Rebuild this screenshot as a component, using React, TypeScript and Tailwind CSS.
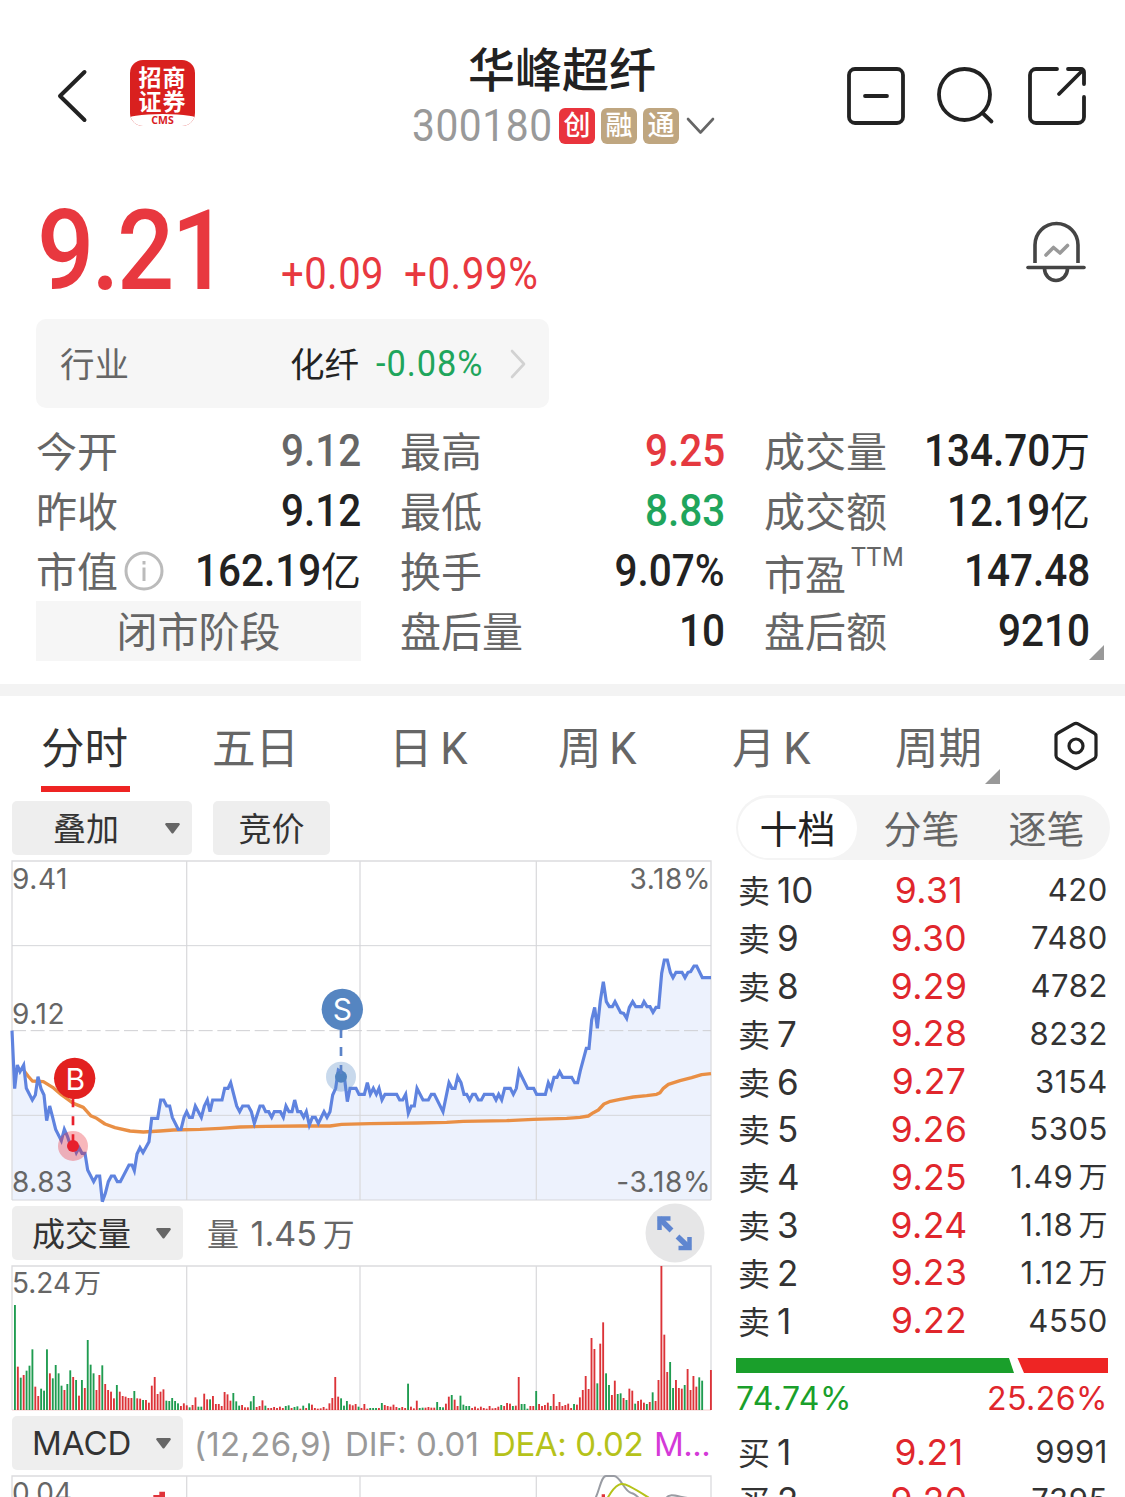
import { clsx } from "clsx";

interface Quote {
  label: string;
  value: string;
  unit?: string;
  tone?: string;
  info?: boolean;
  sup?: string;
}

const quotes: Quote[][] = [
  [
    { label: "今开", value: "9.12", tone: "text-[#666]" },
    { label: "最高", value: "9.25", tone: "text-[#e5393f]" },
    { label: "成交量", value: "134.70", unit: "万" },
  ],
  [
    { label: "昨收", value: "9.12" },
    { label: "最低", value: "8.83", tone: "text-[#1fa55c]" },
    { label: "成交额", value: "12.19", unit: "亿" },
  ],
  [
    { label: "市值", value: "162.19", unit: "亿", info: true },
    { label: "换手", value: "9.07%" },
    { label: "市盈", value: "147.48", sup: "TTM" },
  ],
  [
    { label: "闭市阶段", value: "" },
    { label: "盘后量", value: "10" },
    { label: "盘后额", value: "9210" },
  ],
];

const asks = [
  { level: "10", price: "9.31", vol: "420" },
  { level: "9", price: "9.30", vol: "7480" },
  { level: "8", price: "9.29", vol: "4782" },
  { level: "7", price: "9.28", vol: "8232" },
  { level: "6", price: "9.27", vol: "3154" },
  { level: "5", price: "9.26", vol: "5305" },
  { level: "4", price: "9.25", vol: "1.49", unit: "万" },
  { level: "3", price: "9.24", vol: "1.18", unit: "万" },
  { level: "2", price: "9.23", vol: "1.12", unit: "万" },
  { level: "1", price: "9.22", vol: "4550" },
];

const bids = [
  { level: "1", price: "9.21", vol: "9991" },
  { level: "2", price: "9.20", vol: "7395" },
];

// plot units are a third of a pixel
const pricePoints =
  "36,542 44,716 52,645 60,665 71,645 79,715 97,750 106,735 114,680 123,716 132,735 140,812 149,768 158,802 167,838 184,872 193,838 202,858 211,885 219,880 229,908 237,893 246,910 255,910 263,960 281,995 290,978 299,978 307,1055 316,1030 325,995 334,978 343,978 352,995 361,995 387,945 396,945 403,962 411,912 420,893 429,908 447,875 455,805 473,805 482,750 491,750 500,768 509,768 517,802 535,838 543,838 552,802 560,785 568,802 577,802 586,768 604,802 613,768 622,750 630,785 638,750 666,750 674,715 684,715 692,698 710,768 719,785 728,768 745,768 754,785 763,820 780,768 789,768 797,785 806,785 815,802 823,785 841,785 850,802 858,768 867,785 876,785 884,750 893,785 902,785 911,802 919,785 928,825 937,802 946,802 955,820 972,785 981,802 990,785 998,735 1007,715 1015,660 1024,665 1033,680 1042,755 1050,715 1068,715 1077,733 1093,733 1102,698 1111,733 1120,715 1129,733 1137,715 1146,750 1155,733 1190,733 1199,750 1208,750 1217,733 1225,790 1234,768 1243,768 1251,715 1269,750 1285,750 1294,733 1303,733 1329,785 1347,698 1356,715 1365,715 1373,680 1383,698 1392,733 1400,733 1409,750 1418,733 1426,733 1435,750 1444,750 1453,733 1479,733 1488,750 1496,733 1505,750 1514,715 1531,715 1540,733 1549,715 1557,663 1583,715 1601,715 1610,733 1636,733 1645,698 1653,715 1662,682 1671,682 1679,665 1688,682 1715,682 1724,698 1733,698 1741,662 1759,595 1767,595 1775,510 1784,472 1792,535 1801,452 1810,395 1819,455 1828,470 1837,470 1845,455 1862,488 1871,490 1880,505 1888,472 1898,455 1907,470 1925,470 1932,455 1941,470 1950,470 1959,487 1968,472 1976,472 1985,370 1993,330 2002,330 2011,367 2019,383 2028,367 2046,367 2055,383 2064,367 2072,365 2082,348 2090,348 2107,383 2133,383";

const averagePoints =
  "72,662 84,678 97,693 130,695 158,712 185,735 220,760 250,772 272,797 290,805 315,822 345,833 390,843 430,846 480,843 520,840 600,838 660,835 720,831 800,829 900,828 990,828 1025,823 1110,821 1250,819 1340,817 1390,814 1520,812 1600,808 1700,805 1740,802 1765,798 1780,788 1795,780 1812,762 1828,755 1860,748 1900,741 1940,737 1970,733 1980,728 1990,715 2005,703 2040,692 2075,683 2105,674 2133,671";

// one entry per minute: direction + height
const volumes =
  "g315 r130 g97 r105 g118 g133 g182 r70 r42 g64 g58 g182 r110 g95 g135 g110 g73 r60 g78 g119 r99 g90 r43 g90 r66 g210 g136 g110 r60 r105 g134 r78 r60 r55 r35 g75 r55 r42 r40 r36 r36 g57 r35 r34 g30 r30 r22 r73 r99 r48 r55 r62 g28 g27 g36 g27 g20 r12 r20 r14 g8 r15 r38 g10 g10 r49 r32 g32 r42 r18 r18 r12 r54 r47 r28 g51 g26 g13 r15 r8 r8 g26 g42 r9 r12 r29 g13 r6 r6 r9 r6 r10 r6 g12 g14 r6 g9 g11 r4 g13 r6 g20 r16 r6 r4 r5 r9 r4 r20 r36 r99 r40 g35 g13 g27 r17 r14 r18 g10 r6 r18 r4 g6 g6 g6 r6 g21 r15 r12 r10 r16 r9 g6 r9 r6 g79 r10 r5 r28 g6 g7 r7 r9 r7 r7 g24 g9 g8 r19 r40 g45 r31 r12 g43 g16 g12 g12 r6 r10 r5 r10 r6 r4 r12 r5 r6 r10 g15 r12 r21 r19 g12 r13 r99 g18 g18 g4 r12 r12 g57 r18 r12 r15 r22 g12 r48 r12 r24 r12 r15 r19 r6 g18 r16 r38 r60 r102 r63 r216 r183 g80 r199 r263 g110 g75 r45 r88 g48 g50 r36 g30 r64 r58 g19 r27 r31 r22 g18 r24 g53 r27 r90 r432 r226 r114 g144 g66 r90 r66 r64 g75 r123 r60 r102 r70 g98 g88 r0 r0 r120".split(
    " "
  );

function Header() {
  return (
    <header className="grid h-[192px] grid-cols-[412px_303px_1fr] text-[#222]">
      <div className="flex items-start gap-[41px] pt-[60px] pl-[56px]">
        <svg className="mt-[8px] h-[56px] w-[33px]" viewBox="0 0 33 56" fill="none" stroke="#222" strokeWidth="4" strokeLinecap="round" strokeLinejoin="round">
          <path d="M28.5 4 4 28 28.500 52" />
        </svg>
        {/* broker logo */}
        <div className="flex h-[66px] w-[65px] flex-col items-center overflow-hidden rounded-[13px] bg-[#d9201f] font-['Noto_Sans_CJK_SC',sans-serif] text-white">
          <div className="pt-[4px] text-center text-[23px] leading-[24px] font-bold tracking-[1px]">
            <div>招商</div>
            <div>证券</div>
          </div>
          <div className="mt-[2px] w-[75px] flex-1 rounded-t-[50%] bg-white text-center font-['Open_Sans',sans-serif] text-[10.500px] leading-[12px] font-bold text-[#d9201f]">
            CMS
          </div>
        </div>
      </div>
      <div className="flex flex-col items-center pt-[42px] pr-[3px]">
        <h1 className="text-[47px] leading-[58px] font-medium">华峰超纤</h1>
        <div className="mt-[6px] -mr-[3px] flex h-[40px] items-center">
          <span className="w-[147px] origin-left scale-x-[0.915] text-[44.500px] leading-[40px] tracking-[0.600px] text-[#999]">
            300180
          </span>
          <div className="flex gap-[6px] text-[27px] leading-[37px] font-medium text-white">
            <span className="h-[36px] w-[36px] rounded-[6px] bg-[#e9343d] text-center">创</span>
            <span className="h-[36px] w-[36px] rounded-[6px] bg-[#bfa680] text-center">融</span>
            <span className="h-[36px] w-[36px] rounded-[6px] bg-[#bfa680] text-center">通</span>
          </div>
          <svg className="ml-[7px] h-[18px] w-[29px]" viewBox="0 0 29 18" fill="none" stroke="#666" strokeWidth="2.600" strokeLinecap="round" strokeLinejoin="round">
            <path d="M2 2 14.500 15.500 27 2" />
          </svg>
        </div>
      </div>
      <div className="flex items-start gap-[31px] pt-[66px] pl-[131px]">
        <svg className="h-[60px] w-[60px]" viewBox="0 0 60 60" fill="none" stroke="#222" strokeWidth="3.800" strokeLinecap="round">
          <rect x="3" y="3" width="54" height="54" rx="6" />
          <path d="M19 30h22" />
        </svg>
        <svg className="h-[60px] w-[60px]" viewBox="0 0 60 60" fill="none" stroke="#222" strokeWidth="3.800" strokeLinecap="round">
          <circle cx="27.500" cy="28.500" r="25.500" />
          <path d="m45.500 47 9 8.500" />
        </svg>
        <svg className="-ml-[1px] h-[60px] w-[60px]" viewBox="0 0 60 60" fill="none" stroke="#222" strokeWidth="3.800" strokeLinecap="round" strokeLinejoin="round">
          <path d="M30 3H9a6 6 0 0 0-6 6v42a6 6 0 0 0 6 6h42a6 6 0 0 0 6-6V31" />
          <path d="M41 3h13a3 3 0 0 1 3 3v12M55 5 32 28" />
        </svg>
      </div>
    </header>
  );
}

function PriceBlock() {
  return (
    <section className="flex h-[127px] items-start text-[#e8383f]">
      <div className="w-[244px] pl-[37px]">
        <div className="w-[200px] origin-left scale-x-[0.9] text-[112px] leading-[118px] font-medium tracking-[-3px]">
          9.21
        </div>
      </div>
      <div className="flex w-[780px] gap-[22px] pt-[58px] pl-[37px] text-[43.500px] leading-[50px] tracking-[0.500px]">
        <span className="w-[101px] origin-left scale-x-[0.92] whitespace-nowrap">+0.09</span>
        <span className="origin-left scale-x-[0.93]">+0.99%</span>
      </div>
      <svg className="mt-[29px] h-[62px] w-[64px]" viewBox="0 0 64 62" fill="none" stroke="#444" strokeWidth="3.600" strokeLinecap="round">
        <path d="M11 42V24a21 21 0 0 1 43 0v18" strokeLinecap="butt" />
        <path d="M4 46.500h56" />
        <path d="M20.500 47.500a11.500 12 0 0 0 23 0" />
        <path d="m22 34 7.500-7.500 6.500 5.500 7.500-7.500" stroke="#999" strokeLinejoin="round" />
      </svg>
    </section>
  );
}

function IndustryBar() {
  return (
    <div className="ml-[36px] flex h-[89px] w-[513px] items-center rounded-[10px] bg-[#f6f6f6] pl-[24px]">
      <span className="w-[230px] pt-[5px] text-[34.500px] text-[#666]">行业</span>
      <span className="w-[86px] pt-[5px] text-[34.500px] text-[#222]">化纤</span>
      <span className="w-[134px] origin-left scale-x-[0.93] text-[37px] tracking-[1px] text-[#1fa55c]">-0.08%</span>
      <svg className="h-[32px] w-[16px]" viewBox="0 0 16 32" fill="none" stroke="#d2d2d2" strokeWidth="2.600" strokeLinecap="round" strokeLinejoin="round">
        <path d="M2 3 14 16 2 29" />
      </svg>
    </div>
  );
}

function QuoteCell({ label, value, unit, tone, info, sup }: Quote) {
  if (!value) {
    return (
      <div className="h-[60px] bg-[#f6f6f6] text-center text-[41px] leading-[64px] text-[#666]">{label}</div>
    );
  }
  return (
    <div className="flex h-[60px] items-center justify-between whitespace-nowrap">
      <div className="flex items-center text-[41px] leading-[60px] text-[#666]">
        <span className={sup ? "pt-[10px]" : "pt-[4px]"}>{label}</span>
        {sup && <sup className="top-0 mb-[26px] ml-[5px] text-[25px] leading-[28px] tracking-[0.500px]">{sup}</sup>}
        {info && (
          <svg className="ml-[6px] h-[40px] w-[40px]" viewBox="0 0 40 40" fill="none" stroke="#bbb" strokeWidth="3">
            <circle cx="20" cy="20" r="18" />
            <path d="M20 16.500V30M20 10v3.500" />
          </svg>
        )}
      </div>
      <div className={clsx("flex items-center text-[44px] leading-[60px]", tone ?? "text-[#222]")}>
        <span className="origin-right scale-x-[0.92] font-medium">{value}</span>
        {unit && <span className="pt-[4px] text-[40px]">{unit}</span>}
      </div>
    </div>
  );
}

function QuoteGrid() {
  return (
    <section className="relative mt-[13px] mr-[35px] ml-[36px] grid h-[263px] grid-cols-[325px_325px_326px] content-start gap-x-[39px]">
      {quotes.flat().map((q) => (
        <QuoteCell key={q.label} {...q} />
      ))}
      <svg className="absolute top-[224px] right-[-14px] h-[15px] w-[15px]" viewBox="0 0 15 15" fill="#999">
        <path d="M15 0v15H0z" />
      </svg>
    </section>
  );
}

function PeriodTabs() {
  return (
    <nav className="flex h-[99px] items-start pt-[20px] text-[43.500px] leading-[67px] [word-spacing:-3px] whitespace-nowrap text-[#666]">
      <div className="ml-[41px] w-[171px] text-[#333]">
        <div className="h-[70px]">分时</div>
        <div className="h-[6px] w-[89px] bg-[#ee2423]" />
      </div>
      <div className="w-[177px]">五日</div>
      <div className="w-[169px]">日 K</div>
      <div className="w-[174px]">周 K</div>
      <div className="w-[163px]">月 K</div>
      <div className="relative w-[105px]">
        周期
        <svg className="absolute top-[53px] right-0 h-[15px] w-[15px]" viewBox="0 0 15 15" fill="#999">
          <path d="M15 0v15H0z" />
        </svg>
      </div>
      <svg className="mt-[5px] ml-[53px] h-[50px] w-[46px]" viewBox="0 0 46 50" fill="none" stroke="#222" strokeWidth="3.200" strokeLinejoin="round">
        <path d="M20.500 3.200a5 5 0 0 1 5 0L41 12a4 4 0 0 1 2 3.500v19a4 4 0 0 1-2 3.500l-15.500 8.800a5 5 0 0 1-5 0L5 38a4 4 0 0 1-2-3.500v-19A4 4 0 0 1 5 12z" />
        <circle cx="23" cy="25" r="7" />
      </svg>
    </nav>
  );
}

function Caret() {
  return (
    <svg className="h-[11px] w-[15px]" viewBox="0 0 15 11" fill="#666">
      <path d="M1.500 0h12a1.200 1.200 0 0 1 1 2L8.500 10a1.300 1.300 0 0 1-2 0L.5 2a1.200 1.200 0 0 1 1-2z" />
    </svg>
  );
}

function GridLines({ top, bottom }: { top: number; bottom: number }) {
  return (
    <g stroke="#dcdcde" strokeWidth="4">
      <path d={`M36 ${bottom}V${top}H2133V${bottom}`} fill="none" />
      <path d={`M560 ${top}V${bottom}M1080 ${top}V${bottom}M1609 ${top}V${bottom}`} />
    </g>
  );
}

function PriceChart() {
  return (
    <div className="relative h-[346px] text-[28px] leading-[34px] tracking-[0.600px] text-[#666]">
      <svg className="block h-[346px] w-[720px] overflow-visible" viewBox="0 30 2160 1038" fill="none">
        <path d={`M36,1050 L${pricePoints} L2133,1050Z`} fill="#edf2fd" />
        <GridLines top={33} bottom={1050} />
        <path d="M36 287H2133M36 796H2133M36 1050H2133" stroke="#d5d6da" strokeWidth="3" />
        <path d="M36 542H2133" stroke="#cfcfd2" strokeWidth="3" strokeDasharray="42 14" />
        <polyline points={averagePoints} stroke="#e98f45" strokeWidth="10" strokeLinejoin="round" />
        <polyline points={pricePoints} stroke="#5f83df" strokeWidth="9.500" />
        {/* buy marker */}
        <circle cx="219" cy="888" r="45" fill="#e8202c" fillOpacity=".32" />
        <circle cx="219" cy="888" r="18" fill="#e8202c" />
        <path d="M219 880V740" stroke="#e8202c" strokeWidth="8" strokeDasharray="27" />
        <circle cx="224" cy="685" r="62" fill="#e2201f" />
        {/* sell marker */}
        <circle cx="1023" cy="680" r="45" fill="#5588c4" fillOpacity=".32" />
        <circle cx="1023" cy="680" r="18" fill="#4f83c0" />
        <path d="M1023 672V530" stroke="#5b83c8" strokeWidth="8" strokeDasharray="27" />
        <circle cx="1027" cy="478" r="62" fill="#5585c1" />
        <g fill="#fff" fontFamily="Inter, sans-serif" fontSize="90" letterSpacing="0" textAnchor="middle">
          <text x="226" y="721">B</text>
          <text x="1027" y="509">S</text>
        </g>
      </svg>
      <span className="absolute top-[2px] left-[12px]">9.41</span>
      <span className="absolute top-[137px] left-[12px]">9.12</span>
      <span className="absolute top-[305px] left-[12px]">8.83</span>
      <span className="absolute top-[2px] right-[9px]">3.18%</span>
      <span className="absolute top-[305px] right-[9px]">-3.18%</span>
    </div>
  );
}

function VolumeChart() {
  return (
    <div className="relative h-[151px]">
      <svg className="block h-[151px] w-[720px]" viewBox="0 210 2160 453">
        <GridLines top={213} bottom={645} />
        <path d="M36 645H2133" stroke="#efb5b5" strokeWidth="2" />
        {volumes.map((v, i) => {
          const h = Number(v.slice(1));
          return (
            <rect
              key={i}
              x={42 + i * 8.736}
              y={645 - h}
              width="5.600"
              height={h}
              fill={v[0] === "g" ? "#1f9c50" : "#dc3338"}
            />
          );
        })}
      </svg>
      <span className="absolute top-[1px] left-[12px] text-[28px] leading-[34px] text-[#666]">
        5.24<span className="ml-[3px] text-[27px]">万</span>
      </span>
    </div>
  );
}

function LeftPanel() {
  return (
    <div className="w-[720px] pt-[6px] font-['Inter','Noto_Sans_CJK_SC',sans-serif]">
      <div className="flex h-[59px] gap-[21px] pl-[12px] text-[33px] leading-[57px] text-[#333]">
        <div className="flex h-[54px] w-[180px] items-center justify-between rounded-[5px] bg-[#eee] pr-[12px] pl-[41px]">
          <span className="pt-[3px]">叠加</span>
          <Caret />
        </div>
        <div className="h-[54px] w-[117px] rounded-[5px] bg-[#eee] text-center">竞价</div>
      </div>
      <PriceChart />
      <div className="flex h-[59px] pl-[12px]">
        <div className="flex h-[54px] w-[171px] items-center justify-between rounded-[5px] bg-[#eee] pr-[12px] pl-[20px] text-[33px] text-[#333]">
          <span className="pt-[4px]">成交量</span>
          <Caret />
        </div>
        <div className="w-[462px] pl-[24px] text-[34px] leading-[55px] text-[#666]">
          <span className="text-[32px]">量</span> <span className="ml-[2px]">1.45</span>
          <span className="ml-[6px] text-[32px]">万</span>
        </div>
        <svg className="-mt-[3px] h-[60px] w-[60px]" viewBox="0 0 60 60" fill="none" stroke="#5f86d0">
          <circle cx="30" cy="30" r="29.500" fill="#e6e6e7" stroke="none" />
          <path d="M25.500 15.500H14.500V27M33.500 45H44.500V34" strokeWidth="4.500" />
          <path d="M14.500 15.500 26.500 27.500M44.500 45 32.500 33.500" strokeWidth="5.500" />
        </svg>
      </div>
      <VolumeChart />
      <div className="flex h-[59px] items-start pl-[12px]">
        <div className="flex h-[54px] w-[171px] shrink-0 items-center justify-between rounded-[5px] bg-[#eee] pr-[12px] pl-[20px] text-[33px] text-[#333]">
          <span className="pt-[2px]">MACD</span>
          <Caret />
        </div>
        <div className="flex pl-[11px] text-[33px] leading-[56px] whitespace-nowrap text-[#999]">
          <span className="w-[151px] tracking-[0.300px]">(12,26,9)</span>
          <span className="w-[147px]">DIF: 0.01</span>
          <span className="w-[162px] tracking-[-0.400px] text-[#b5c21a]">DEA: 0.02</span>
          <span className="tracking-[-0.500px] text-[#d43ad8]">M...</span>
        </div>
      </div>
      <div className="relative">
        <svg className="block h-[30px] w-[720px]" viewBox="0 840 2160 90" fill="none" strokeWidth="6">
          <GridLines top={843} bottom={940} />
          <path d="M460 900h18v-10h17v40h-35zM1805 898h10v32h-10z" fill="#e0333a" />
          <path d="M1785 912C1798 890 1803 843 1818 843H1842C1862 843 1872 890 1894 894 1908 896 1918 910 1930 925M1996 915C2004 890 2030 905 2070 910" stroke="#999ca3" />
          <path d="M1812 930C1850 850 1870 865 1890 875 1920 890 1940 905 1965 920" stroke="#b5c21a" />
        </svg>
        <span className="absolute top-[1px] left-[12px] text-[28px] leading-[34px] text-[#666]">0.04</span>
      </div>
    </div>
  );
}

function DepthRow({ side, level, price, vol, unit }: { side: string; level: string; price: string; vol: string; unit?: string }) {
  return (
    <div className="grid h-[47.800px] grid-cols-[135px_112px_123px] items-center whitespace-nowrap text-[#333]">
      <span className="text-[35px]">
        <span className="mr-[7px] text-[32px]">{side}</span>
        {level}
      </span>
      <span className="text-center text-[35.500px] tracking-[0.400px] text-[#e0262c]">{price}</span>
      <span className="text-right text-[31px] tracking-[0.600px]">
        {vol}
        {unit && <span className="ml-[5px] text-[29px]">{unit}</span>}
      </span>
    </div>
  );
}

function OrderBook() {
  return (
    <div className="w-[374px] font-['Inter','Noto_Sans_CJK_SC',sans-serif]">
      <div className="flex h-[65px] w-[374px] items-center rounded-full bg-[#f4f4f4] p-[2px] text-[38px] leading-[62px] text-[#666]">
        <div className="h-[60px] w-[119px] rounded-full bg-white text-center text-[#222]">十档</div>
        <div className="h-[60px] w-[129px] text-center">分笔</div>
        <div className="h-[60px] w-[121px] text-center">逐笔</div>
      </div>
      <div className="pt-[4px] pl-[2px]">
        {asks.map((row) => (
          <DepthRow key={row.level} side="卖" {...row} />
        ))}
      </div>
      <svg className="mt-[16px] block h-[15px] w-[372px]" viewBox="0 0 372 15">
        <path d="M0 0h273l5 15H0z" fill="#1a9f2b" />
        <path d="M281.500 0H372v15h-84z" fill="#ee2524" />
      </svg>
      <div className="flex h-[52px] w-[372px] justify-between text-[32px] leading-[51px] tracking-[0.500px]">
        <span className="text-[#1a9f2b]">74.74%</span>
        <span className="text-[#e0262c]">25.26%</span>
      </div>
      <div className="pt-[1px] pl-[2px]">
        {bids.map((row) => (
          <DepthRow key={row.level} side="买" {...row} />
        ))}
      </div>
    </div>
  );
}

export default function App() {
  return (
    <main className="h-[1497px] w-[1125px] overflow-hidden bg-white font-['Roboto','Noto_Sans_CJK_SC',sans-serif]">
      <Header />
      <PriceBlock />
      <IndustryBar />
      <QuoteGrid />
      <div className="h-[12px] bg-[#f3f3f3]" />
      <PeriodTabs />
      <div className="flex gap-[16px]">
        <LeftPanel />
        <OrderBook />
      </div>
    </main>
  );
}
